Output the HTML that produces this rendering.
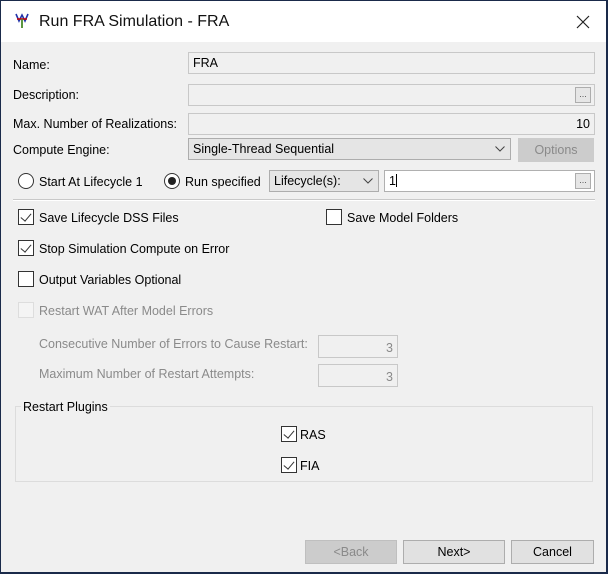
<!DOCTYPE html>
<html><head><style>
*{box-sizing:border-box;margin:0;padding:0}
body{width:608px;height:574px;overflow:hidden;background:#1a2a4a;font-family:"Liberation Sans",sans-serif;font-size:12.5px;color:#000}
#win{position:absolute;left:1px;top:1px;width:605px;height:571px;background:#f0f0f0}
#title{position:absolute;left:0;top:0;width:605px;height:41px;background:#fff}
.a{position:absolute;white-space:nowrap}
.f{position:absolute;background:#f0f0f0;border:1px solid #c8c8c8;height:22px;line-height:20px;padding:0 4px}
.w{background:#fff;border-color:#b0b0b0}
.cb{position:absolute;width:16px;height:16px;border:1px solid #333;background:#fff}
.cb.c::after{content:"";position:absolute;left:4px;top:1px;width:5px;height:9px;border:solid #333;border-width:0 1.5px 1.5px 0;transform:rotate(40deg)}
.btn{position:absolute;height:24px;border:1px solid #adadad;background:#e1e1e1;text-align:center;line-height:22px}
.el{position:absolute;width:16px;height:16px;border:1px solid #adadad;background:#e6e6e6;font-size:9px;line-height:12px;text-align:center;color:#555}
.g{color:#8a8a8a}
.rad{position:absolute;width:16px;height:16px;border:1px solid #333;border-radius:50%;background:#fff}
</style></head><body>
<div id="win">
<div id="title">
<svg class="a" style="left:14px;top:12px" width="14" height="16" viewBox="0 0 14 16"><path d="M1 1 L4 8 L7 2 L10 8 L13 1" stroke="#2233aa" stroke-width="1.6" fill="none"/><path d="M2 6 H12" stroke="#c00" stroke-width="1.5"/><path d="M7 6 V15" stroke="#4a8a2a" stroke-width="1.8"/></svg>
<div class="a" style="left:38px;top:12px;font-size:16px;color:#111">Run FRA Simulation - FRA</div>
<svg class="a" style="left:575px;top:14px" width="14" height="14"><path d="M1 1L13 13M13 1L1 13" stroke="#222" stroke-width="1.2"/></svg>
</div>
<div class="a" style="left:12px;top:57px">Name:</div>
<div class="f" style="left:187px;top:51px;width:407px">FRA</div>
<div class="a" style="left:12px;top:87px">Description:</div>
<div class="f" style="left:187px;top:83px;width:407px"></div>
<div class="el" style="left:574px;top:86px">...</div>
<div class="a" style="left:12px;top:116px">Max. Number of Realizations:</div>
<div class="f" style="left:187px;top:112px;width:407px;text-align:right">10</div>
<div class="a" style="left:12px;top:142px">Compute Engine:</div>
<div class="f" style="left:187px;top:137px;width:323px;background:#e5e5e5;border-color:#adadad">Single-Thread Sequential</div>
<svg class="a" style="left:494px;top:145px" width="10" height="6"><path d="M0.5 0.5L5 5L9.5 0.5" stroke="#444" fill="none"/></svg>
<div class="btn g" style="left:517px;top:137px;width:76px;background:#ccc;border-color:#ccc">Options</div>
<div class="rad" style="left:17px;top:172px"></div>
<div class="a" style="left:38px;top:174px">Start At Lifecycle 1</div>
<div class="rad" style="left:163px;top:172px"><div style="position:absolute;left:3px;top:3px;width:8px;height:8px;border-radius:50%;background:#222"></div></div>
<div class="a" style="left:184px;top:174px">Run specified</div>
<div class="f" style="left:268px;top:169px;width:110px;background:#e5e5e5;border-color:#adadad">Lifecycle(s):</div>
<svg class="a" style="left:362px;top:177px" width="10" height="6"><path d="M0.5 0.5L5 5L9.5 0.5" stroke="#444" fill="none"/></svg>
<div class="f w" style="left:383px;top:169px;width:211px">1<span style="display:inline-block;width:1px;height:13px;background:#000;vertical-align:-2px"></span></div>
<div class="el" style="left:574px;top:172px">...</div>
<div class="a" style="left:12px;top:198px;width:582px;height:2px;border-top:1px solid #c8c8c8;border-bottom:1px solid #fff"></div>
<div class="cb c" style="left:17px;top:208px"></div><div class="a" style="left:38px;top:210px">Save Lifecycle DSS Files</div>
<div class="cb" style="left:325px;top:208px"></div><div class="a" style="left:346px;top:210px">Save Model Folders</div>
<div class="cb c" style="left:17px;top:239px"></div><div class="a" style="left:38px;top:241px">Stop Simulation Compute on Error</div>
<div class="cb" style="left:17px;top:270px"></div><div class="a" style="left:38px;top:272px">Output Variables Optional</div>
<div class="cb" style="left:17px;top:301px;border-color:#ddd;background:#f4f4f4"></div><div class="a g" style="left:38px;top:303px">Restart WAT After Model Errors</div>
<div class="a g" style="left:38px;top:336px">Consecutive Number of Errors to Cause Restart:</div>
<div class="f g" style="left:317px;top:334px;width:80px;height:23px;text-align:right;line-height:24px">3</div>
<div class="a g" style="left:38px;top:366px">Maximum Number of Restart Attempts:</div>
<div class="f g" style="left:317px;top:363px;width:80px;height:23px;text-align:right;line-height:24px">3</div>
<div class="a" style="left:14px;top:405px;width:578px;height:76px;border:1px solid #dcdcdc"></div>
<div class="a" style="left:20px;top:399px;background:#f0f0f0;padding:0 2px">Restart Plugins</div>
<div class="cb c" style="left:280px;top:425px"></div><div class="a" style="left:299px;top:427px">RAS</div>
<div class="cb c" style="left:280px;top:456px"></div><div class="a" style="left:299px;top:458px">FIA</div>
<div class="btn g" style="left:304px;top:539px;width:92px;background:#ccc;border-color:#bfbfbf">&lt;Back</div>
<div class="btn" style="left:402px;top:539px;width:102px">Next&gt;</div>
<div class="btn" style="left:510px;top:539px;width:83px">Cancel</div>
</div>
</body></html>
